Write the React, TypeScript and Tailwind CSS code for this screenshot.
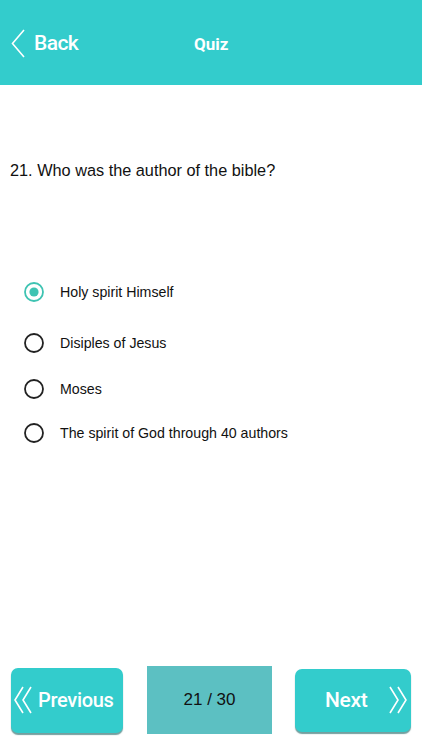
import { useState } from "react";

const options = [
  "Holy spirit Himself",
  "Disiples of Jesus",
  "Moses",
  "The spirit of God through 40 authors",
];

// vertical spacing between option rows, taken from the layout
const rowMargins = ["mt-0", "mt-[29px]", "mt-[24px]", "mt-[22px]"];

function Radio({ checked }: { checked: boolean }) {
  return (
    <svg width="22" height="22" viewBox="0 0 22 22" className="shrink-0">
      <circle
        cx="11"
        cy="11"
        r="9"
        fill="none"
        stroke={checked ? "#3ec3b2" : "#222"}
        strokeWidth="1.8"
      />
      {checked && <circle cx="11" cy="11" r="4.6" fill="#3ec3b2" />}
    </svg>
  );
}

export default function App() {
  const [selected, setSelected] = useState(0);

  return (
    <div className="flex h-[750px] w-[422px] flex-col bg-white font-['Liberation_Sans',Arial,sans-serif] text-[#111]">
      {/* Header */}
      <div className="relative flex h-[85px] items-center bg-[#33cccc] text-white">
        <button type="button" className="ml-[11px] mt-[2px] flex items-center gap-[9px]">
          <svg width="14" height="29" viewBox="0 0 14 29">
            <path d="M13 1 L1.5 14.5 L13 28" fill="none" stroke="#fff" strokeWidth="1.6" />
          </svg>
          <span className="font-['Roboto',sans-serif] text-[21px] font-medium leading-none tracking-[-0.6px]">Back</span>
        </button>
        <h1 className="absolute left-[194px] top-[32px] font-['Roboto',sans-serif] text-[17px] font-bold">Quiz</h1>
      </div>

      {/* Question */}
      <p className="ml-[10px] mt-[75px] text-[16.3px] leading-5">21. Who was the author of the bible?</p>

      {/* Options */}
      <div className="ml-[23px] mt-[101px] flex flex-col">
        {options.map((opt, i) => (
          <button
            type="button"
            key={opt}
            onClick={() => setSelected(i)}
            className={`flex items-center gap-[15px] text-left ${rowMargins[i]}`}
          >
            <Radio checked={selected === i} />
            <span className="text-[14.2px] leading-5">{opt}</span>
          </button>
        ))}
      </div>

      {/* Footer nav */}
      <div className="mt-auto mb-[16px] flex items-center px-[11px]">
        <button
          type="button"
          className="flex h-[65px] w-[112px] items-center gap-[5px] rounded-[7px] bg-[#33cccc] pl-[2px] text-white shadow-[0_2px_1px_rgba(0,80,80,0.55)]"
        >
          <svg width="20" height="28" viewBox="0 0 20 28">
            <path d="M10 1 L2 14 L10 27 M18 1 L10 14 L18 27" fill="none" stroke="#fff" strokeWidth="1.6" />
          </svg>
          <span className="font-['Roboto',sans-serif] text-[20px] font-medium leading-none tracking-[-0.3px]">Previous</span>
        </button>
        <div className="ml-[24px] flex h-[68px] w-[125px] items-center justify-center bg-[#5cc0c2] text-[17px]">
          21 / 30
        </div>
        <button
          type="button"
          className="ml-auto flex h-[63px] w-[116px] items-center rounded-[7px] bg-[#33cccc] text-white shadow-[0_2px_1px_rgba(0,80,80,0.55)]"
        >
          <span className="ml-[30px] font-['Roboto',sans-serif] text-[21px] font-medium leading-none tracking-[-0.3px]">Next</span>
          <svg width="20" height="28" viewBox="0 0 20 28" className="ml-auto mr-[3px]">
            <path d="M2 1 L10 14 L2 27 M10 1 L18 14 L10 27" fill="none" stroke="#fff" strokeWidth="1.6" />
          </svg>
        </button>
      </div>
    </div>
  );
}
